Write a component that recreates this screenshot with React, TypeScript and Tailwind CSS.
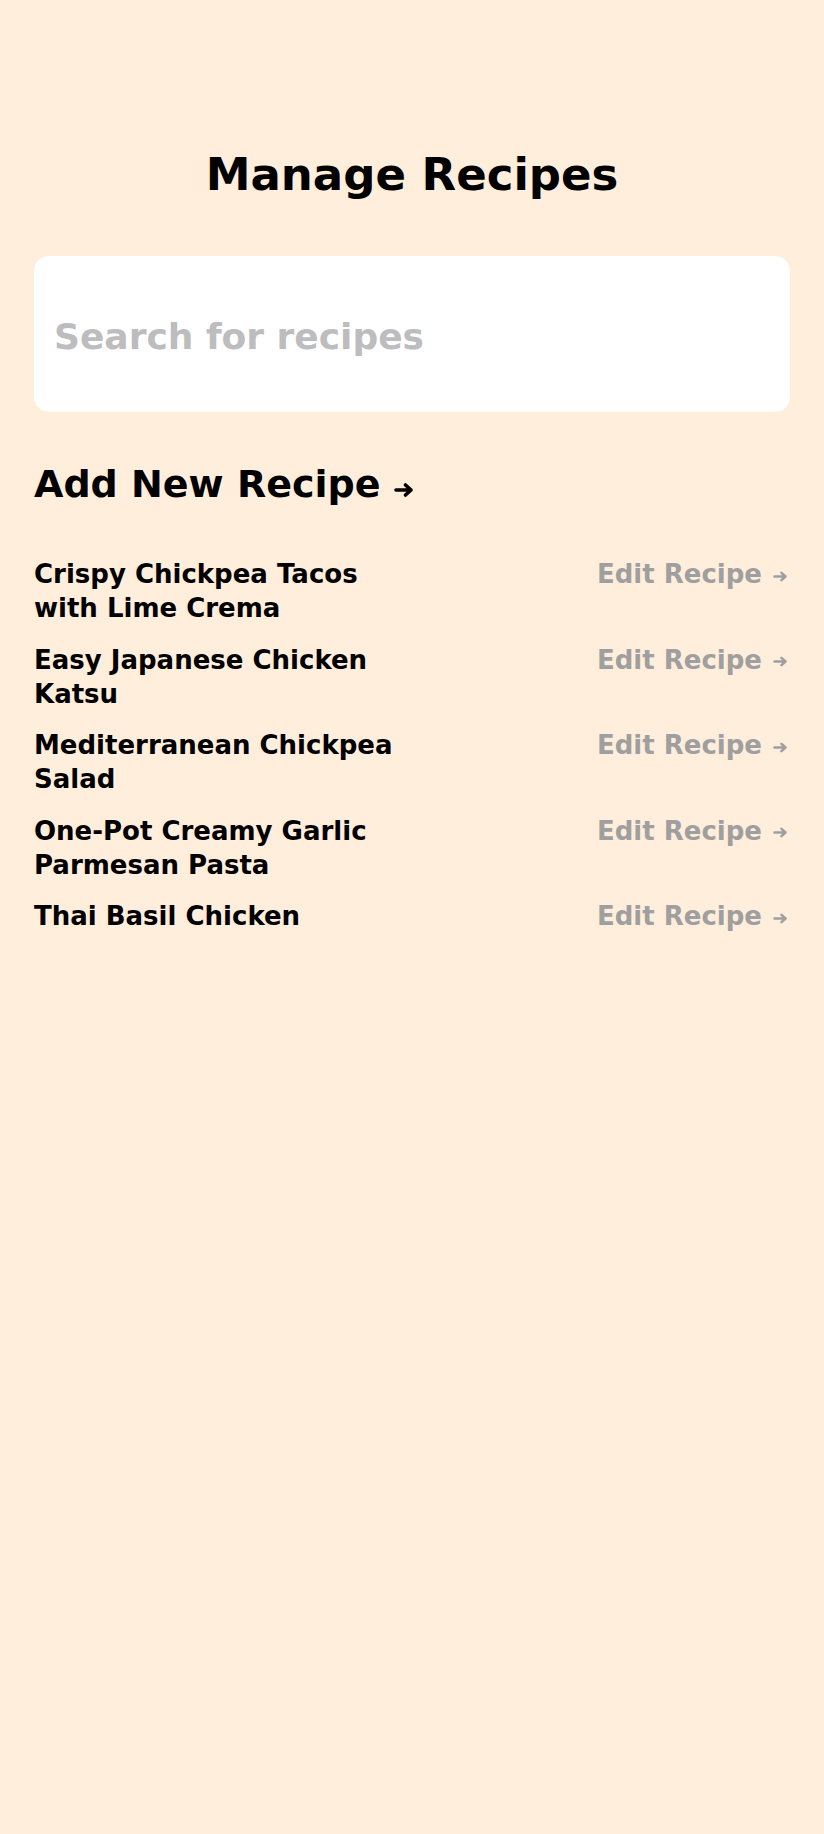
import React from 'react';

const recipes = [
  'Crispy Chickpea Tacos with Lime Crema',
  'Easy Japanese Chicken Katsu',
  'Mediterranean Chickpea Salad',
  'One-Pot Creamy Garlic Parmesan Pasta',
  'Thai Basil Chicken',
];

function Arrow({ className, stroke }: { className: string; stroke: number }) {
  return (
    <svg viewBox="0 0 19 14" className={className} fill="none" stroke="currentColor" strokeWidth={stroke} strokeLinecap="round" strokeLinejoin="round">
      <path d="M2 7h15M11.5 2 17 7l-5.5 5" />
    </svg>
  );
}

export default function App() {
  return (
    <div className="min-h-[1834px] w-full bg-[#ffeedb] px-[34px] pt-[151px] font-['DejaVu_Sans','Liberation_Sans',sans-serif] text-black">
      <h1 className="text-center text-[45px] font-bold leading-[48px]">Manage Recipes</h1>

      <div className="mt-[57px] flex h-[156px] items-center rounded-[15px] bg-white px-5 pt-[6px]">
        <input
          type="text"
          placeholder="Search for recipes"
          className="w-full bg-transparent text-[36px] font-bold text-black outline-none placeholder:text-[#bdbcbe]"
        />
      </div>

      <button className="mt-[50px] flex items-center gap-[13px] text-[38px] font-bold leading-[44px]">
        Add New Recipe
        <Arrow className="mt-[11px] h-[14px] w-[19px]" stroke={3.6} />
      </button>

      <div className="mt-[51px] flex flex-col gap-[17.5px]">
        {recipes.map((name) => (
          <div key={name} className="flex items-start justify-between">
            <span className="w-1/2 text-[26px] font-bold leading-[34px]">{name}</span>
            <button className="flex h-[34px] items-center gap-[11px] text-[26px] font-bold leading-[34px] text-[#9f9f9f]">
              Edit Recipe
              <Arrow className="mr-[3px] mt-[4px] h-[11px] w-[14px]" stroke={3.4} />
            </button>
          </div>
        ))}
      </div>
    </div>
  );
}
